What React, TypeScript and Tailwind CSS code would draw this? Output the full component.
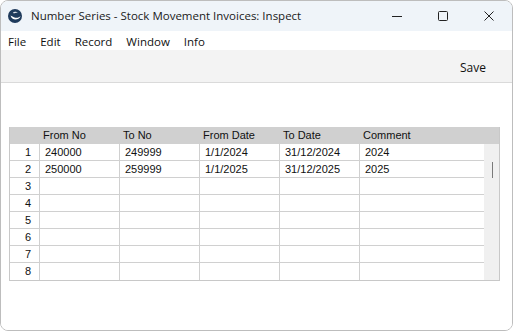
const columns = [
  { label: 'From No', width: 'w-[80px]' },
  { label: 'To No', width: 'w-[80px]' },
  { label: 'From Date', width: 'w-[80px]' },
  { label: 'To Date', width: 'w-[80px]' },
  { label: 'Comment', width: 'w-[124px]' },
];

const rows = [
  ['240000', '249999', '1/1/2024', '31/12/2024', '2024'],
  ['250000', '259999', '1/1/2025', '31/12/2025', '2025'],
  [], [], [], [], [], [],
];

const Logo = () => (
  <svg width="14" height="14" viewBox="0 0 14 14">
    <circle cx="7" cy="7" r="7" fill="#1f3b5c" />
    <path d="M2.5 6.5c0.8 3.2 4.2 5 7.4 3.6 1.4-0.6 2.3-1.8 2.6-3-1.2 1.4-3.2 2.1-5.2 1.6-2-0.5-3.6-1.7-4.8-2.2z" fill="#ffffff" />
    <path d="M5 3.2c1.6-0.9 3.8-0.6 5 0.8-1.4-0.4-3-0.3-4.2 0.5z" fill="#ffffff" opacity="0.85" />
  </svg>
);

const App = () => {
  return (
    <div className="w-[514px] h-[331px] bg-white overflow-hidden" style={{ fontFamily: '"Open Sans", "Noto Sans", sans-serif' }}>
      <div className="w-[513px] h-[331px] border border-[#bdbdbd] rounded-[8px] overflow-hidden flex flex-col">
        {/* title bar */}
        <div className="h-[30px] bg-[#eff4f9] flex items-center shrink-0">
          <div className="pl-[7px] pr-[9px] flex items-center">
            <Logo />
          </div>
          <span className="text-[11.5px] text-[#1a1a1a]">Number Series - Stock Movement Invoices: Inspect</span>
          <div className="ml-auto flex items-center h-full">
            <div className="w-[46px] h-full flex items-center justify-center">
              <svg width="10" height="10" viewBox="0 0 10 10"><path d="M0 5.5h10" stroke="#222" strokeWidth="1" /></svg>
            </div>
            <div className="w-[46px] h-full flex items-center justify-center">
              <svg width="10" height="10" viewBox="0 0 10 10"><rect x="0.5" y="0.5" width="9" height="9" rx="1" fill="none" stroke="#222" strokeWidth="1" /></svg>
            </div>
            <div className="w-[46px] h-full flex items-center justify-center">
              <svg width="10" height="10" viewBox="0 0 10 10"><path d="M0.5 0.5l9 9M9.5 0.5l-9 9" stroke="#222" strokeWidth="1" /></svg>
            </div>
          </div>
        </div>

        {/* menu bar */}
        <div className="h-[19px] bg-white flex items-center gap-[14px] pl-[7px] pt-[2px] text-[11.5px] text-[#111] shrink-0">
          <span>File</span>
          <span>Edit</span>
          <span>Record</span>
          <span>Window</span>
          <span>Info</span>
        </div>

        {/* toolbar */}
        <div className="h-[33px] bg-[#f3f3f3] border-b border-[#dadada] flex items-center justify-end pr-[26px] pt-[3px] shrink-0">
          <span className="text-[12px] text-[#111]">Save</span>
        </div>

        {/* content */}
        <div className="flex-1 bg-white pt-[44px] pl-[8px]" style={{ fontFamily: '"Liberation Sans", Arial, sans-serif' }}>
          <div className="w-[491px] border-l border-b border-r border-[#c8c8c8] text-[11px] text-[#111]">
            <div className="flex h-[17px] bg-[#d0d0d0] items-center">
              <div className="w-[30px]" />
              {columns.map((c) => (
                <div key={c.label} className={`${c.width} pl-[3px] leading-[17px]`}>{c.label}</div>
              ))}
            </div>
            <div className="flex">
              <div className="w-[474px]">
                {rows.map((r, i) => (
                  <div key={i} className="flex h-[17px] border-b border-[#d0d0d0] last:border-b-0">
                    <div className="w-[30px] border-r border-[#d0d0d0] text-right pr-[8px] leading-[16px]">{i + 1}</div>
                    {columns.map((c, j) => (
                      <div key={c.label} className={`${c.width} ${j < columns.length - 1 ? 'border-r border-[#d0d0d0]' : ''} pl-[5px] leading-[16px]`}>
                        {r[j] ?? ''}
                      </div>
                    ))}
                  </div>
                ))}
              </div>
              <div className="w-[16px] bg-[#f0f0f0] relative">
                <div className="absolute left-[8px] top-[18px] w-[1px] h-[16px] bg-[#7a7a7a]" />
              </div>
            </div>
          </div>
        </div>
      </div>
    </div>
  );
};

export default App;
